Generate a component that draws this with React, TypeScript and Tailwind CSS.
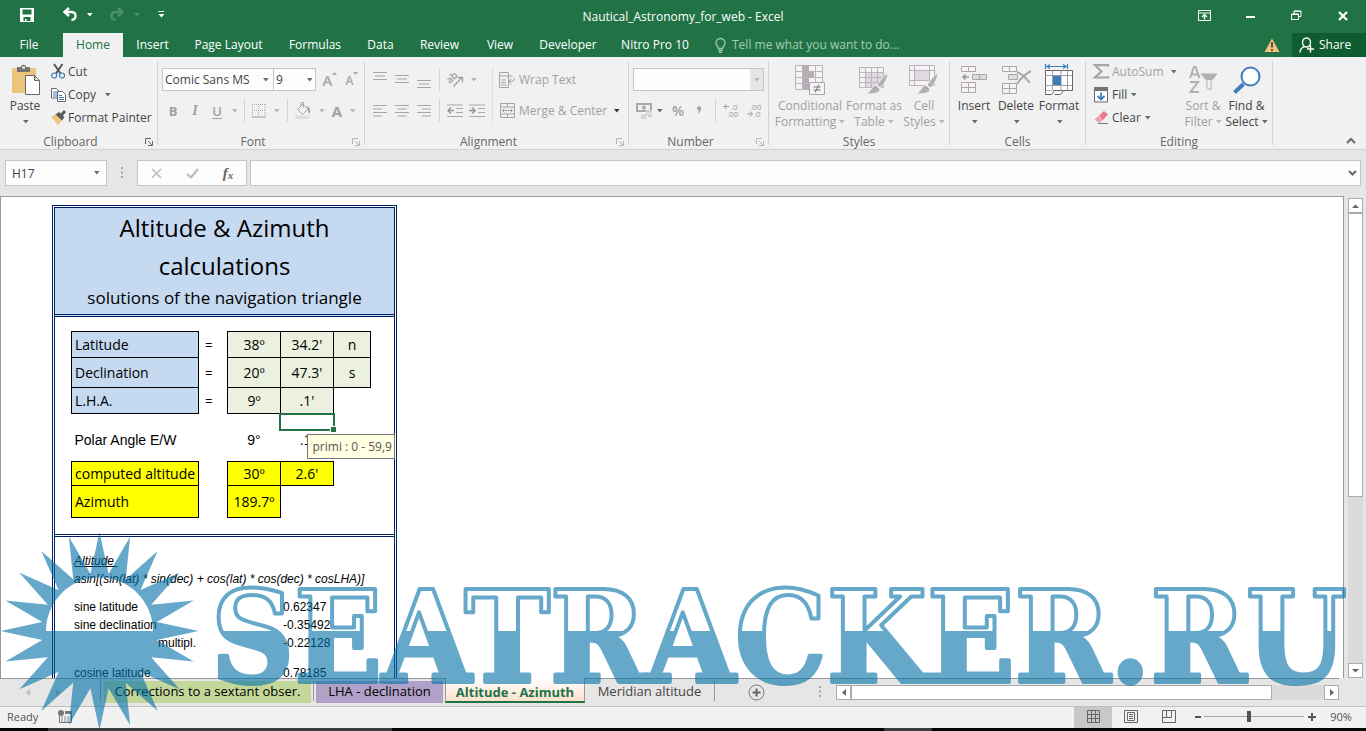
import { FC, ReactNode } from "react";

type IconProps = { w: number; h: number; children: ReactNode };

const Icon: FC<IconProps> = ({ w, h, children }) => (
  <svg width={w} height={h} viewBox={`0 0 ${w} ${h}`} fill="none" aria-hidden="true" className="shrink-0 overflow-visible">
    {children}
  </svg>
);

// Small drop-down triangle
const Caret: FC<{ tone?: "dark" | "mid" | "light" }> = ({ tone = "mid" }) => {
  const color = { dark: "#333333", mid: "#6a6a6a", light: "#b5b5b5" }[tone];
  return (
    <Icon w={7} h={4}>
      <path d="M1 0h5.6L3.8 3.4z" fill={color} />
    </Icon>
  );
};

const Divider: FC = () => <span className="h-[22px] w-px shrink-0 bg-[#d2d2d2]" />;

type ToolProps = { label: string; width: string; disabled?: boolean; children: ReactNode };

const Tool: FC<ToolProps> = ({ label, width, disabled = true, children }) => (
  <button
    type="button"
    aria-label={label}
    disabled={disabled}
    className={`flex h-6 shrink-0 items-center justify-center ${width}`}
  >
    {children}
  </button>
);

type GroupProps = { title: string; width: string; launcher?: "on" | "off"; children: ReactNode };

const Group: FC<GroupProps> = ({ title, width, launcher, children }) => (
  <section aria-label={title} className={`relative flex shrink-0 flex-col ${width}`}>
    <div className="flex h-[77px]">{children}</div>
    <div className="flex h-[15px] items-center pr-px">
      <span className="flex-1 text-center text-[12px] leading-[15px] text-[#666666]">{title}</span>
      {launcher && (
        <button
          type="button"
          aria-label={`${title} settings`}
          className={`flex w-4 justify-center ${launcher === "on" ? "text-[#666666]" : "text-[#b5b5b5]"}`}
        >
          <Icon w={8} h={8}>
            <path d="M.5 6V.5H6" stroke="currentColor" />
            <path d="M3 3l4 4M7.5 3v4.5H3" stroke="currentColor" />
          </Icon>
        </button>
      )}
    </div>
    <span className="absolute right-0 top-1 h-[84px] w-px bg-[#d2d2d2]" />
  </section>
);

type BigButtonProps = {
  icon: ReactNode;
  line1: string;
  line2?: string;
  width: string;
  disabled?: boolean;
};

const BigButton: FC<BigButtonProps> = ({ icon, line1, line2, width, disabled }) => (
  <button
    type="button"
    disabled={disabled}
    className={`flex shrink-0 flex-col items-center text-[12px] leading-4 ${width} ${disabled ? "text-[#a0a0a0]" : "text-[#444444]"}`}
  >
    <span className="flex h-[41px] items-center pt-1">{icon}</span>
    <span className="whitespace-nowrap">{line1}</span>
    <span className="flex h-4 items-center gap-0.5 whitespace-nowrap">
      {line2}
      <Caret tone={disabled ? "light" : "mid"} />
    </span>
  </button>
);

type RowButtonProps = { icon: ReactNode; label: string; disabled?: boolean; caret?: "dark" | "mid"; gap?: string };

const RowButton: FC<RowButtonProps> = ({ icon, label, disabled, caret, gap = "gap-1" }) => (
  <button
    type="button"
    className={`flex h-[23px] items-center whitespace-nowrap text-[12px] leading-4 ${gap} ${disabled ? "text-[#a0a0a0]" : "text-[#444444]"}`}
  >
    <span className="flex w-4 justify-center">{icon}</span>
    <span>{label}</span>
    {caret && <Caret tone={caret} />}
  </button>
);

// Text lines drawn in each alignment
const LINES: Record<string, string> = {
  top: "M0 1.5h14M2 5h10M0 8.5h14",
  middle: "M0 4.5h14M2 8h10M0 11.5h14",
  bottom: "M0 9.5h14M2 13h10M0 16.5h14",
  left: "M0 3.5h14M0 7h9M0 10.5h14M0 14h9",
  center: "M0 3.5h14M2.5 7h9M0 10.5h14M2.5 14h9",
  right: "M0 3.5h14M5 7h9M0 10.5h14M5 14h9",
};

const AlignIcon: FC<{ kind: string }> = ({ kind }) => (
  <Icon w={14} h={18}>
    <path d={LINES[kind]} stroke="#a6a6a6" />
  </Icon>
);

const IndentIcon: FC<{ arrow: string }> = ({ arrow }) => (
  <Icon w={16} h={14}>
    <path d="M0 1h16M9 4.500h7M9 8.500h7M0 12.500h16" stroke="#a9a9a9" />
    <path d={arrow} stroke="#989898" strokeWidth="1.6" />
  </Icon>
);

const Brush: FC = () => (
  <>
    <path d="M29 8c-5 3-8 8-11 12l3 3c4-3 7-8 8-15z" fill="#b0aeb0" stroke="#f1f1f1" />
    <path d="M17 20l4 4c0 4-5 5-14 5 5-2 5-8 10-9z" fill="#b0aeb0" stroke="#f1f1f1" />
  </>
);

const TABS = [
  { name: "Insert", width: "w-[59px]" },
  { name: "Page Layout", width: "w-[93px]" },
  { name: "Formulas", width: "w-[80px]" },
  { name: "Data", width: "w-[51px]" },
  { name: "Review", width: "w-[67px]" },
  { name: "View", width: "w-[54px]" },
  { name: "Developer", width: "w-[82px]" },
  { name: "Nitro Pro 10", width: "w-[92px]" },
];

const TitleBar: FC = () => (
  <header className="grid h-[33px] shrink-0 grid-cols-[1fr_auto_1fr] items-center bg-[#217346] text-white">
    <div className="flex items-center pb-1 pl-5">
      <button type="button" aria-label="Save">
        <Icon w={14} h={14}>
          <path d="M0 0h14v14H0z" fill="#fff" />
          <path d="M2.500 1.500h9v5h-9zM3.500 9h7v4H6.500v-2h-1.500v2H3.500z" fill="#217346" />
        </Icon>
      </button>
      <button type="button" aria-label="Undo" className="ml-7 flex items-center gap-2">
        <Icon w={16} h={14}>
          <path d="M7 0L2.500 4 7 8M3 4h6c6 0 6 7 .5 8" stroke="#fff" strokeWidth="2.400" />
        </Icon>
        <Icon w={7} h={4}>
          <path d="M1 0h5.600L3.800 3.400z" fill="#fff" />
        </Icon>
      </button>
      <button type="button" aria-label="Redo" disabled className="ml-4 flex items-center gap-2">
        <Icon w={16} h={14}>
          <path d="M9 0l4.500 4L9 8M13 4H7C1 4 1 11 6.500 12" stroke="#4d9069" strokeWidth="2.400" />
        </Icon>
        <Icon w={7} h={4}>
          <path d="M1 0h5.600L3.800 3.400z" fill="#4d9069" />
        </Icon>
      </button>
      <button type="button" aria-label="Customize toolbar" className="ml-[18px]">
        <Icon w={7} h={7}>
          <path d="M.5.500h5.500" stroke="#fff" />
          <path d="M.5 3h6L3.500 6.500z" fill="#fff" />
        </Icon>
      </button>
    </div>
    <h1 className="text-[12px] leading-4">Nautical_Astronomy_for_web - Excel</h1>
    <div className="flex items-center justify-end pb-0.5 pr-[18px]">
      <button type="button" aria-label="Ribbon options" className="mr-[35px]">
        <Icon w={13} h={11}>
          <path d="M.5.500h12v10H.5zM.5 3h12" stroke="#fff" />
          <path d="M6.500 9.500V5M4 7l2.500-2.500L9 7" stroke="#fff" strokeWidth="1.300" />
        </Icon>
      </button>
      <button type="button" aria-label="Minimize" className="mr-9">
        <Icon w={9} h={5}>
          <path d="M0 4h9" stroke="#fff" strokeWidth="2" />
        </Icon>
      </button>
      <button type="button" aria-label="Restore" className="mr-9">
        <Icon w={11} h={11}>
          <path d="M.5 4h7v5.500h-7zM3 4V1h7v5.500H7.500M.5 4.500h7M3 1.300h7" stroke="#fff" />
        </Icon>
      </button>
      <button type="button" aria-label="Close">
        <Icon w={10} h={10}>
          <path d="M1 1l8 8M9 1L1 9" stroke="#fff" strokeWidth="2.200" />
        </Icon>
      </button>
    </div>
  </header>
);

const RibbonTabs: FC = () => (
  <nav aria-label="Ribbon" className="flex h-6 shrink-0 items-stretch bg-[#217346] text-[12px] leading-4 text-white">
    <button type="button" className="w-[58px] shrink-0">File</button>
    <button type="button" className="ml-[5px] w-[60px] shrink-0 bg-[#f1f1f1] text-[#217346]">Home</button>
    {TABS.map((tab) => (
      <button key={tab.name} type="button" className={`shrink-0 whitespace-nowrap ${tab.width}`}>
        {tab.name}
      </button>
    ))}
    <button type="button" className="ml-3.5 flex items-center gap-1.5 whitespace-nowrap text-[#a6cbb5]">
      <Icon w={11} h={15}>
        <path d="M3.500 10.500c0-2-2.500-3-2.500-5.500a4.500 4.500 0 019 0c0 2.500-2.500 3.500-2.500 5.500zM3.500 12.500h4M4 14.300h3" stroke="#a6cbb5" strokeWidth="1.300" />
      </Icon>
      Tell me what you want to do...
    </button>
    <span className="ml-auto mr-3 flex items-center">
      <Icon w={16} h={14}>
        <path d="M8 .5L15.500 14H.5z" fill="#f0c27b" />
        <path d="M8 4v5.500M8 11v2" stroke="#444" strokeWidth="1.800" />
      </Icon>
    </span>
    <button type="button" className="flex w-[74px] items-center gap-1 bg-[#0e5c2f] pl-[7px]">
      <Icon w={16} h={16}>
        <path d="M7.500 1a4 4.500 0 010 9 4 4.500 0 010-9M1 15.500c0-3 2-5 4.500-5.800M8 12h7M11.500 8.500v7" stroke="#fff" strokeWidth="1.400" />
      </Icon>
      Share
    </button>
  </nav>
);

const ClipboardGroup: FC = () => (
  <Group title="Clipboard" width="w-[158px]" launcher="on">
    <BigButton
      width="w-[50px]"
      line1="Paste"
      icon={
        <Icon w={30} h={32}>
          <path d="M2 4h24v25H2z" fill="#ecc47c" />
          <path d="M7 3h4c0-3 5-3 5 0h4v5H7z" fill="#737373" />
          <path d="M12 2.500h3v2h-3z" fill="#f1f1f1" />
          <path d="M15.500 11.500h9l5 5v14h-14zM24.500 11.500v5h5" fill="#fff" stroke="#666" />
        </Icon>
      }
    />
    <div className="flex flex-col items-start pt-[3px]">
      <RowButton
        gap="gap-0.5"
        label="Cut"
        icon={
          <Icon w={14} h={15}>
            <path d="M3 0l6.500 9.500M11.500 0L5 9.500" stroke="#555" strokeWidth="2" />
            <circle cx="3.200" cy="11.500" r="2.500" stroke="#3e7dbd" strokeWidth="1.200" />
            <circle cx="11" cy="11.500" r="2.500" stroke="#3e7dbd" strokeWidth="1.200" />
          </Icon>
        }
      />
      <div className="flex items-center gap-2">
        <RowButton
          gap="gap-0.5"
          label="Copy"
          icon={
            <Icon w={15} h={14}>
              <path d="M.5.500h5l2.500 2.500v7H.5z" fill="#fff" stroke="#666" />
              <path d="M2 4h4M2 6h4M2 8h4" stroke="#3e7dbd" />
              <path d="M6.500 3.500h5l3 3v7h-8z" fill="#fff" stroke="#666" />
              <path d="M8 7.500h3M8 9.500h5M8 11.500h5" stroke="#3e7dbd" />
            </Icon>
          }
        />
        <Caret />
      </div>
      <RowButton
        gap="gap-0.5"
        label="Format Painter"
        icon={
          <Icon w={15} h={14}>
            <path d="M0 5.500l5-2 6 6-4 4.500z" fill="#ecc47c" />
            <path d="M4.500 3.500L8 1l5.500 5L11 9.500z" fill="#5b5b5b" />
            <path d="M10 4.500L14 0" stroke="#5b5b5b" strokeWidth="3" />
          </Icon>
        }
      />
    </div>
  </Group>
);

const FontGroup: FC = () => (
  <Group title="Font" width="w-[207px]" launcher="off">
    <div className="flex flex-col pl-1 pt-[7px]">
      <div className="flex h-[31px] items-center">
        <div className="relative h-[23px] w-[112px]">
          <select aria-label="Font name" className="block h-full w-full appearance-none border border-[#c6c6c6] bg-[#fdfdfd] pl-0.5 text-[12px] leading-4 text-[#444444]">
            <option>Comic Sans MS</option>
          </select>
          <span className="pointer-events-none absolute inset-y-0 right-[5px] flex items-center"><Caret /></span>
        </div>
        <div className="relative -ml-px h-[23px] w-[43px]">
          <select aria-label="Font size" className="block h-full w-full appearance-none border border-[#c6c6c6] bg-[#fdfdfd] pl-0.5 text-[12px] leading-4 text-[#444444]">
            <option>9</option>
          </select>
          <span className="pointer-events-none absolute inset-y-0 right-[3px] flex items-center"><Caret /></span>
        </div>
        <Tool label="Increase font size" width="w-7">
          <span className="text-[15px] font-semibold leading-4 text-[#a6a6a6]">A</span>
          <span className="mb-3 flex">
            <Icon w={5} h={3}><path d="M0 3h5L2.500 0z" fill="#a6a6a6" /></Icon>
          </span>
        </Tool>
        <Tool label="Decrease font size" width="w-4">
          <span className="pt-0.5 text-[12px] font-semibold leading-4 text-[#a6a6a6]">A</span>
          <span className="mb-3 flex">
            <Icon w={5} h={3}><path d="M0 0h5L2.500 3z" fill="#a6a6a6" /></Icon>
          </span>
        </Tool>
      </div>
      <div className="flex h-[31px] items-center text-[13px] leading-4 text-[#a0a0a0]">
        <Tool label="Bold" width="w-[22px]"><span className="font-bold">B</span></Tool>
        <Tool label="Italic" width="w-[22px]"><span className="font-['Liberation_Serif',serif] text-[14px] font-bold italic">I</span></Tool>
        <Tool label="Underline" width="w-[22px]"><span className="font-semibold underline underline-offset-2">U</span></Tool>
        <Tool label="Underline style" width="w-3"><Caret tone="light" /></Tool>
        <span className="w-1" />
        <Divider />
        <Tool label="Borders" width="w-7">
          <Icon w={14} h={14}>
            <path d="M.5 0v12M6.500 0v12M13 0v12M0 .5h13M0 6.500h13" stroke="#b59dbb" strokeDasharray="1 1" />
            <path d="M0 13h14" stroke="#999" />
          </Icon>
        </Tool>
        <Caret tone="light" />
        <span className="w-[7px]" />
        <Divider />
        <Tool label="Fill colour" width="w-[30px]">
          <Icon w={16} h={17}>
            <path d="M2.500 7.500L8 2l5 5-5.500 5.500zM6 5V.500h2.500v5" fill="#f1f1f1" stroke="#a6a6a6" />
            <path d="M12 4c3 1 4 4 2.500 8-2-2-1-5-2.500-8z" fill="#a6a6a6" />
            <path d="M0 13.500h15V17H0z" fill="#e3dde3" />
          </Icon>
        </Tool>
        <Caret tone="light" />
        <Tool label="Font colour" width="w-6"><span className="text-[15px] font-bold">A</span></Tool>
        <Caret tone="light" />
      </div>
    </div>
  </Group>
);

const AlignmentGroup: FC = () => (
  <Group title="Alignment" width="w-[264px]" launcher="off">
    <div className="flex flex-col pl-1 pt-[7px]">
      <div className="flex h-[31px] items-center">
        <Tool label="Top align" width="w-[22px]"><AlignIcon kind="top" /></Tool>
        <Tool label="Middle align" width="w-[22px]"><AlignIcon kind="middle" /></Tool>
        <Tool label="Bottom align" width="w-[22px]"><AlignIcon kind="bottom" /></Tool>
        <span className="w-1" />
        <Divider />
        <Tool label="Orientation" width="w-[30px]">
          <Icon w={16} h={16}>
            <text x="-1" y="9" transform="rotate(-45 5 6)" fontSize="10" fontWeight="600" fill="#a0a0a0">ab</text>
            <path d="M6.500 14.500l8.500-9M10.500 5.500h5v5" stroke="#a0a0a0" strokeWidth="1.300" />
          </Icon>
        </Tool>
        <Caret tone="light" />
      </div>
      <div className="flex h-[31px] items-center">
        <Tool label="Align left" width="w-[22px]"><AlignIcon kind="left" /></Tool>
        <Tool label="Center" width="w-[22px]"><AlignIcon kind="center" /></Tool>
        <Tool label="Align right" width="w-[22px]"><AlignIcon kind="right" /></Tool>
        <span className="w-1" />
        <Divider />
        <span className="w-1" />
        <Tool label="Decrease indent" width="w-[22px]"><IndentIcon arrow="M7 6.500H1M4 3.500l-3 3 3 3" /></Tool>
        <Tool label="Increase indent" width="w-[22px]"><IndentIcon arrow="M0 6.500h6M3 3.500l3 3-3 3" /></Tool>
      </div>
    </div>
    <span className="ml-1 mt-2.5 h-[55px] w-px bg-[#dcdcdc]" />
    <div className="flex flex-col justify-between pb-[12px] pl-1.5 pt-[11px]">
      <RowButton
        disabled
        label="Wrap Text"
        icon={
          <Icon w={16} h={16}>
            <path d="M.5.500h9v15h-9zM.5 4h13M2 8h5M2 10.500h5M2 13h6" stroke="#a6a2a6" />
            <path d="M15.500 6c0 3-2 3.500-5 3.500M12.500 7l-3 2.500 3 2.500" stroke="#a0a0a0" />
          </Icon>
        }
      />
      <div className="flex items-center gap-1.5">
        <RowButton
          disabled
          label="Merge &amp; Center"
          icon={
            <Icon w={15} h={15}>
              <path d="M.5.500h14v14H.5zM.5 4h14M.5 11h14M7.500.500V4M7.500 11v3.500" stroke="#a6a2a6" />
              <path d="M2.500 7.500h10M4.500 5.500l-2 2 2 2M10.500 5.500l2 2-2 2" stroke="#a0a0a0" />
            </Icon>
          }
        />
        <Caret tone="dark" />
      </div>
    </div>
  </Group>
);

const NumberGroup: FC = () => (
  <Group title="Number" width="w-[140px]" launcher="off">
    <div className="flex flex-col pl-1 pt-[7px]">
      <div className="flex h-[31px] items-center">
        <div className="relative h-[23px] w-[131px]">
          <select aria-label="Number format" disabled className="block h-full w-full appearance-none border border-[#c6c6c6] bg-[#fdfdfd]">
            <option />
          </select>
          <span className="pointer-events-none absolute inset-y-px right-px flex w-[13px] items-center justify-center bg-[#e6e6e6]">
            <Caret tone="light" />
          </span>
        </div>
      </div>
      <div className="flex h-[31px] items-center text-[#a0a0a0]">
        <Tool label="Accounting format" width="w-[23px]">
          <Icon w={17} h={16}>
            <path d="M1 1h14v7H1z" stroke="#aaa" strokeWidth="2" />
            <circle cx="8" cy="4.500" r="2" fill="#aaa" />
            <path d="M10 8h6M10 10.500h6M5 12.500h6M5 15h5M12 13h4" stroke="#d4cfd4" strokeWidth="1.800" />
          </Icon>
        </Tool>
        <Caret />
        <Tool label="Percent" width="w-[30px]"><span className="text-[14px] font-semibold leading-4">%</span></Tool>
        <Tool label="Comma" width="w-3">
          <Icon w={6} h={9}>
            <path d="M1 2.300a2 2 0 114 0c0 3-1.500 4.500-3.500 6C2.500 6.500 3 5 2.800 4.300A2 2 0 011 2.300z" fill="#a0a0a0" />
          </Icon>
        </Tool>
        <span className="w-2.5" />
        <Divider />
        <Tool label="Increase decimal" width="w-[30px]">
          <Icon w={16} h={15}>
            <path d="M6 3.500H1M3.500 1L1 3.500 3.500 6" stroke="#999" />
            <text x="8" y="7" fontSize="8" fill="#999">.0</text>
            <text x="4" y="14" fontSize="8" fill="#999">.00</text>
          </Icon>
        </Tool>
        <Tool label="Decrease decimal" width="w-4">
          <Icon w={16} h={15}>
            <text x="4" y="7" fontSize="8" fill="#999">.00</text>
            <text x="8" y="14" fontSize="8" fill="#999">.0</text>
            <path d="M1 11h5.500M4 8.500L6.500 11 4 13.500" stroke="#999" />
          </Icon>
        </Tool>
      </div>
    </div>
  </Group>
);

const StylesGroup: FC = () => (
  <Group title="Styles" width="w-[181px]">
    <div className="flex pl-[5px]">
      <BigButton
        disabled
        width="w-[72px]"
        line1="Conditional"
        line2="Formatting"
        icon={
          <Icon w={30} h={30}>
            <path d="M.5.500h27v24H.5z" fill="#f7f2f7" stroke="#b8b4b8" />
            <path d="M8 0h6v6h5v6h-5v6h2v6H8z" fill="#b0aeb0" />
            <path d="M.5 6.500h27M.5 12.500h27M.5 18.500h27M7.500.500v24M20.500.500v24" stroke="#b8b4b8" />
            <path d="M14.500 17.500h15v12h-15z" fill="#f7f2f7" stroke="#a8a4a8" />
            <path d="M18.500 22h7M18.500 25h7M24 19.500l-4 8" stroke="#777" />
          </Icon>
        }
      />
      <BigButton
        disabled
        width="w-14"
        line1="Format as"
        line2="Table"
        icon={
          <Icon w={30} h={30}>
            <path d="M.5 2.500h24v20H.5z" fill="#f7f2f7" stroke="#b8b4b8" />
            <path d="M7 8h17v14H7z" fill="#dfdadf" />
            <path d="M.5 7.500h24M.5 12.500h24M.5 17.500h24M6.500 2.500v20M12.500 2.500v20M18.500 2.500v20" stroke="#b8b4b8" />
            <Brush />
          </Icon>
        }
      />
      <BigButton
        disabled
        width="w-11"
        line1="Cell"
        line2="Styles"
        icon={
          <Icon w={30} h={30}>
            <path d="M.5.500h25v20H.5z" fill="#f7f2f7" stroke="#b8b4b8" />
            <path d="M6 6h14v9H6z" fill="#dfdadf" />
            <path d="M.5 5.500h25M.5 15.500h25M5.500.500v20M20.500.500v20" stroke="#b8b4b8" />
            <Brush />
          </Icon>
        }
      />
    </div>
  </Group>
);

const CellsGroup: FC = () => (
  <Group title="Cells" width="w-[136px]">
    <div className="flex pl-[3px]">
      <BigButton
        width="w-[42px]"
        line1="Insert"
        icon={
          <Icon w={28} h={30}>
            <path d="M1.500 1.500h14v5h-14zM8.500 1.500v5M1.500 17.500h14v10h-14zM8.500 17.500v10M1.500 22.500h14" fill="#f7f2f7" stroke="#aaa6aa" />
            <path d="M12.500 9.500h14v5h-14zM19.500 9.500v5" fill="#dfdadf" stroke="#aaa6aa" />
            <path d="M9 12H3M5.500 9.500L3 12l2.500 2.500" stroke="#999" strokeWidth="1.500" />
          </Icon>
        }
      />
      <BigButton
        width="w-[42px]"
        line1="Delete"
        icon={
          <Icon w={30} h={30}>
            <path d="M1.500 1.500h14v5h-14zM8.500 1.500v5M1.500 18.500h14v10h-14zM8.500 18.500v10M1.500 23.500h14" fill="#f7f2f7" stroke="#aaa6aa" />
            <path d="M7.500 9.500h9v5h-9z" fill="#dfdadf" stroke="#aaa6aa" />
            <path d="M16 7c5 2 9 6 13 11M30 6c-6 3-10 7-14 13" stroke="#aaaaaa" strokeWidth="2" />
          </Icon>
        }
      />
      <BigButton
        width="w-11"
        line1="Format"
        icon={
          <Icon w={30} h={32}>
            <path d="M1.500 0v5M23.500 0v5M3 2.500h19M6 .5l-3 2 3 2M19 .5l3 2-3 2" stroke="#3e7dbd" strokeWidth="1.200" />
            <path d="M1.500 6.500h27v20h-27z" fill="#fff" stroke="#666" />
            <path d="M1.500 11.500h27M1.500 21.500h27M8.500 6.500v20M17 6.500v20M23.500 6.500v20" stroke="#a0a0a0" />
            <path d="M9 12h8v9H9z" fill="#3e7dbd" />
            <path d="M1.500 26.500v4h6l3-4M10.500 30.500h6l3-4" fill="#fff" stroke="#666" />
          </Icon>
        }
      />
    </div>
  </Group>
);

const EditingGroup: FC = () => (
  <Group title="Editing" width="w-[187px]">
    <div className="flex w-[93px] flex-col items-start pl-[7px] pt-[3px]">
      <div className="flex items-center gap-1.5">
        <RowButton
          disabled
          gap="gap-[3px]"
          label="AutoSum"
          icon={
            <Icon w={16} h={15}>
              <path d="M15 2.800V1.200H2l6.500 6.300L2 13.500h13V12" stroke="#a6a6a6" strokeWidth="2.200" />
            </Icon>
          }
        />
        <Caret />
      </div>
      <RowButton
        gap="gap-[3px]"
        label="Fill"
        caret="mid"
        icon={
          <Icon w={14} h={16}>
            <path d="M.5 2.500h13v12.500H.5z" fill="#fff" stroke="#666" />
            <path d="M0 0h14v4H0z" fill="#737373" />
            <path d="M7 5.500v7M3.500 9L7 12.500 10.500 9" stroke="#3e7dbd" strokeWidth="1.800" />
          </Icon>
        }
      />
      <RowButton
        gap="gap-[3px]"
        label="Clear"
        caret="mid"
        icon={
          <Icon w={14} h={13}>
            <path d="M5 4.500L10 0l4 3.500-5.500 6z" fill="#e8798f" />
            <path d="M4.500 5L.500 8.500l4 3h1.500l2-2z" fill="#eea0ae" />
            <path d="M4 12.500h10" stroke="#777" />
          </Icon>
        }
      />
    </div>
    <BigButton
      disabled
      width="w-12"
      line1="Sort &amp;"
      line2="Filter"
      icon={
        <Icon w={29} h={28}>
          <path d="M1 12L5 1h1.500L10.500 12M2.500 8.500h6.500M1 16h8L1.500 26h8.500" stroke="#b0b0b0" strokeWidth="2" />
          <path d="M12 8h16l-6 7v9l-4-2v-7z" fill="#f7f2f7" stroke="#b0b0b0" />
          <path d="M12 8h16l-5 6h-5z" fill="#b0b0b0" />
        </Icon>
      }
    />
    <BigButton
      width="w-[39px]"
      line1="Find &amp;"
      line2="Select"
      icon={
        <Icon w={28} h={28}>
          <path d="M1.500 26.500l9-8.500" stroke="#3e7dbd" strokeWidth="4" />
          <circle cx="17.500" cy="10.500" r="9" fill="#fff" stroke="#3e7dbd" strokeWidth="2" />
        </Icon>
      }
    />
  </Group>
);

const Ribbon: FC = () => (
  <div className="flex shrink-0 border-b border-[#d2d2d2] bg-[#f1f1f1]">
    <ClipboardGroup />
    <FontGroup />
    <AlignmentGroup />
    <NumberGroup />
    <StylesGroup />
    <CellsGroup />
    <EditingGroup />
    <button type="button" aria-label="Collapse ribbon" className="mb-1 ml-auto mr-2.5 self-end">
      <Icon w={10} h={8}>
        <path d="M1 6l4-4 4 4" stroke="#6a6a6a" strokeWidth="2" />
      </Icon>
    </button>
  </div>
);

const Dots: FC = () => (
  <Icon w={3} h={12}>
    <path d="M0 1h2M0 5.500h2M0 10h2" stroke="#a6a6a6" strokeWidth="2" />
  </Icon>
);

const FormulaBar: FC = () => (
  <div className="flex h-[46px] shrink-0 items-center px-[5px] text-[12px] leading-4 text-[#444444]">
    <div className="relative h-[26px] w-[102px] shrink-0">
      <input aria-label="Name box" defaultValue="H17" className="block h-full w-full border border-[#c6c6c6] bg-[#fdfdfd] px-1.5" />
      <span className="pointer-events-none absolute inset-y-0 right-[7px] flex items-center"><Caret /></span>
    </div>
    <span className="flex w-[30px] shrink-0 justify-center"><Dots /></span>
    <div className="flex h-[26px] w-[110px] shrink-0 items-center border border-[#c6c6c6] bg-[#fdfdfd]">
      <Tool label="Cancel" width="w-9">
        <Icon w={11} h={11}><path d="M1 1l9 9M10 1l-9 9" stroke="#bdbdbd" strokeWidth="1.600" /></Icon>
      </Tool>
      <Tool label="Enter" width="w-9">
        <Icon w={13} h={11}><path d="M1 6l4 3.500L12 1" stroke="#bdbdbd" strokeWidth="2.200" /></Icon>
      </Tool>
      <Tool label="Insert function" width="w-9" disabled={false}>
        <span className="font-['Liberation_Serif',serif] text-[15px] font-bold italic leading-4 text-[#666666]">f</span>
        <span className="pt-1 font-['Liberation_Serif',serif] text-[11px] font-bold italic leading-4 text-[#666666]">x</span>
      </Tool>
    </div>
    <div className="relative ml-[3px] h-[26px] flex-1">
      <input aria-label="Formula" className="block h-full w-full border border-[#c6c6c6] bg-[#fdfdfd] px-2" />
      <button type="button" aria-label="Expand formula bar" className="absolute inset-y-0 right-1 flex items-center">
        <Icon w={9} h={7}>
          <path d="M1 1l3.500 3.500L8 1" stroke="#6a6a6a" strokeWidth="2" />
        </Icon>
      </button>
    </div>
  </div>
);

const LABEL_BLUE = "border border-black bg-[#c5d9f1] pl-[3px]";
const INPUT_GREEN = "border border-black bg-[#ebf1de] text-center";
const YELLOW = "border border-black bg-[#ffff00]";

const InputTable: FC = () => (
  <table className="ml-4 mt-3.5 w-[300px] table-fixed border-collapse text-[14px] leading-5 text-black">
    <colgroup>
      <col className="w-[127px]" />
      <col className="w-[29px]" />
      <col className="w-[53px]" />
      <col className="w-[53px]" />
      <col className="w-[37px]" />
    </colgroup>
    <tbody>
      <tr className="h-[26px]">
        <td className={LABEL_BLUE}>Latitude</td>
        <td className="pl-1.5 text-[13px]">=</td>
        <td className={INPUT_GREEN}>38º</td>
        <td className={INPUT_GREEN}>34.2'</td>
        <td className={INPUT_GREEN}>n</td>
      </tr>
      <tr className="h-[30px]">
        <td className={LABEL_BLUE}>Declination</td>
        <td className="pl-1.5 text-[13px]">=</td>
        <td className={INPUT_GREEN}>20º</td>
        <td className={INPUT_GREEN}>47.3'</td>
        <td className={INPUT_GREEN}>s</td>
      </tr>
      <tr className="h-[26px]">
        <td className={LABEL_BLUE}>L.H.A.</td>
        <td className="pl-1.5 text-[13px]">=</td>
        <td className={INPUT_GREEN}>9º</td>
        <td className={INPUT_GREEN}>.1'</td>
        <td />
      </tr>
      <tr className="h-4">
        <td />
        <td />
        <td />
        <td className="relative p-0">
          {/* Selection frame, fill handle and validation hint */}
          <span className="absolute -inset-y-px -left-0.5 -right-px border-2 border-[#217346]" />
          <span className="absolute -bottom-0.5 -right-0.5 h-[6px] w-[6px] border-l border-t border-white bg-[#217346]" />
          <span
            role="tooltip"
            className="absolute left-[26px] top-5 z-10 flex h-[25px] w-[88px] items-center whitespace-nowrap border border-[#767676] bg-[#ffffe1] pl-[5px] font-['Open_Sans',sans-serif] text-[12px] leading-4 text-[#575757]"
          >
            primi : 0 - 59,9
          </span>
        </td>
        <td />
      </tr>
      <tr className="h-5 font-['Liberation_Sans',Arial,sans-serif] leading-4">
        <td className="pl-[3px]">Polar Angle E/W</td>
        <td />
        <td className="text-center">9°</td>
        <td className="text-center">.1'</td>
        <td />
      </tr>
      <tr className="h-3">
        <td colSpan={5} />
      </tr>
      <tr className="h-6">
        <td className={`whitespace-nowrap pl-[3px] ${YELLOW}`}>computed altitude</td>
        <td />
        <td className={`text-center ${YELLOW}`}>30º</td>
        <td className={`text-center ${YELLOW}`}>2.6'</td>
        <td />
      </tr>
      <tr className="h-8">
        <td className={`pl-[3px] ${YELLOW}`}>Azimuth</td>
        <td />
        <td className={`text-center ${YELLOW}`}>189.7º</td>
        <td />
        <td />
      </tr>
    </tbody>
  </table>
);

const Worksheet: FC = () => (
  <main className="min-w-0 flex-1 overflow-hidden border-l border-r border-t border-[#999999] bg-white">
    <article className="ml-[51px] mt-2 w-[345px] border-x-[3px] border-t-[3px] border-double border-[#002060] font-['Comic_Sans_MS','Open_Sans',sans-serif] text-black">
      <h2 className="border-b-[3px] border-double border-[#002060] bg-[#c5d9f1] pb-1 pt-px text-center">
        <span className="block px-12 text-[24px] leading-[38px]">Altitude &amp; Azimuth calculations</span>
        <span className="block text-[17px] leading-[25px]">solutions of the navigation triangle</span>
      </h2>
      <div className="border-b-[3px] border-double border-[#002060] pb-4">
        <InputTable />
      </div>
      <div className="pb-10 pl-[19px] pt-[15px] font-['Liberation_Sans',Arial,sans-serif] text-[12px] leading-[18px]">
        <p className="whitespace-pre italic underline">Altitude </p>
        <p className="whitespace-nowrap italic">asin[(sin(lat) * sin(dec) + cos(lat) * cos(dec) * cosLHA)]</p>
        <table className="mt-2.5 w-[300px] table-fixed border-collapse">
          <colgroup>
            <col className="w-[122px]" />
            <col className="w-[87px]" />
            <col />
          </colgroup>
          <tbody>
            <tr><td>sine latitude</td><td /><td>0.62347</td></tr>
            <tr><td>sine declination</td><td /><td>-0.35492</td></tr>
            <tr><td className="text-right">multipl.</td><td /><td>-0.22128</td></tr>
            <tr className="align-bottom"><td className="pt-3">cosine latitude</td><td /><td>0.78185</td></tr>
          </tbody>
        </table>
      </div>
    </article>
  </main>
);

const VerticalScroll: FC = () => (
  <div className="flex w-[22px] shrink-0 flex-col pl-1 pr-[3px] pt-0.5">
    <button type="button" aria-label="Scroll up" className="flex h-[15px] shrink-0 items-center justify-center border border-[#ababab] bg-white">
      <Icon w={7} h={4}><path d="M0 4h7L3.500.500z" fill="#666" /></Icon>
    </button>
    <div className="flex-1 bg-[#dbdbdb]">
      <div className="h-[63%] border border-[#ababab] bg-white" />
    </div>
    <button type="button" aria-label="Scroll down" className="flex h-[15px] shrink-0 items-center justify-center border border-[#ababab] bg-white">
      <Icon w={7} h={4}><path d="M0 0h7L3.500 3.500z" fill="#666" /></Icon>
    </button>
  </div>
);

const SheetTabs: FC = () => (
  <div className="flex h-7 shrink-0 items-start text-[13px] leading-4 text-black">
    <div className="flex h-7 w-[100px] shrink-0 items-center gap-[26px] border-t border-[#999999] pl-[26px]">
      <Icon w={4} h={7}><path d="M4 0v7L0 3.500z" fill="#bdbdbd" /></Icon>
      <Icon w={4} h={7}><path d="M0 0v7l4-3.500z" fill="#bdbdbd" /></Icon>
    </div>
    <div className="flex h-7 shrink-0 items-start border-t border-[#999999] pt-0.5">
      <span className="mr-[3px] h-5 w-px bg-[#999999]" />
      <button type="button" className="h-[22px] w-[207px] whitespace-nowrap bg-[#c4d79b] pb-0.5">Corrections to a sextant obser.</button>
      <span className="mx-[2px] h-5 w-px bg-[#999999]" />
      <button type="button" className="h-[22px] w-[127px] whitespace-nowrap bg-[#b1a0c7] pb-0.5">LHA - declination</button>
      <span className="w-0.5" />
    </div>
    <button type="button" className="h-[25px] w-[140px] shrink-0 whitespace-nowrap border-x border-b-2 border-x-[#999999] border-b-[#217346] bg-linear-to-b from-white to-[#fde0cd] pt-1 font-bold text-[#217346]">
      Altitude - Azimuth
    </button>
    <div className="flex h-7 min-w-0 flex-1 items-start border-t border-[#999999] pt-0.5">
      <button type="button" className="h-[22px] w-[129px] shrink-0 whitespace-nowrap pb-0.5 text-[#444444]">Meridian altitude</button>
      <span className="h-5 w-px shrink-0 bg-[#999999]" />
      <button type="button" aria-label="New sheet" className="ml-[33px] mt-[3px] shrink-0">
        <Icon w={17} h={17}>
          <circle cx="8.500" cy="8.500" r="7.500" stroke="#777" />
          <path d="M4.500 8.500h8M8.500 4.500v8" stroke="#666" strokeWidth="2" />
        </Icon>
      </button>
      <span className="ml-auto mr-3.5 mt-[5px]"><Dots /></span>
      <div className="mt-1 flex h-[15px] w-[503px] bg-[#dbdbdb]">
        <button type="button" aria-label="Scroll left" className="flex w-[15px] items-center justify-center border border-[#ababab] bg-white">
          <Icon w={4} h={7}><path d="M4 0v7L0 3.500z" fill="#666" /></Icon>
        </button>
        <div className="w-[421px] border border-[#ababab] bg-white" />
        <button type="button" aria-label="Scroll right" className="ml-auto flex w-[15px] items-center justify-center border border-[#ababab] bg-white">
          <Icon w={4} h={7}><path d="M0 0v7l4-3.500z" fill="#666" /></Icon>
        </button>
      </div>
    </div>
    <span className="w-[27px] shrink-0" />
  </div>
);

const StatusBar: FC = () => (
  <footer className="flex h-[22px] shrink-0 items-center border-t border-[#c0c0c0] bg-[#f1f1f1] pl-[7px] text-[11px] leading-4 text-[#555555]">
    <span className="pb-0.5">Ready</span>
    <button type="button" aria-label="Record macro" className="ml-5 pb-0.5">
      <Icon w={14} h={13}>
        <path d="M1.500 5v7.500h12V2H8" stroke="#777" />
        <path d="M7 1h7v3H7z" fill="#777" />
        <circle cx="3" cy="3" r="3" fill="#777" />
        <path d="M3 7h9M3 9h9M3 11h9" stroke="#888" strokeDasharray="2 1" />
      </Icon>
    </button>
    <div className="ml-auto flex h-full items-center">
      <button type="button" aria-label="Normal view" className="flex h-full w-[38px] items-center justify-center bg-[#c8c8c8] pb-0.5">
        <Icon w={13} h={13}><path d="M.5.500h12v12H.5zM.5 4.500h12M.5 8.500h12M4.500.500v12M8.500.500v12" stroke="#666" /></Icon>
      </button>
      <button type="button" aria-label="Page layout view" className="flex h-full w-[38px] items-center justify-center pb-0.5">
        <Icon w={14} h={13}><path d="M.5.500h13v12H.5zM3.500 2.500h7v8h-7zM5 4.500h4M5 6.500h4M5 8.500h4" stroke="#666" /></Icon>
      </button>
      <button type="button" aria-label="Page break view" className="flex h-full w-[38px] items-center justify-center pb-0.5">
        <Icon w={14} h={13}><path d="M.5.500h13v12H.5zM4.500.500v7M9.500.500v7M.5 7.500h9" stroke="#666" /></Icon>
      </button>
      <button type="button" aria-label="Zoom out" className="ml-1 flex w-3 justify-center pb-0.5">
        <Icon w={6} h={2}><path d="M0 1h6" stroke="#555" strokeWidth="2" /></Icon>
      </button>
      <input
        type="range"
        aria-label="Zoom"
        min={0}
        max={100}
        defaultValue={45}
        className="mb-0.5 h-3 w-[100px] appearance-none bg-[linear-gradient(#a6a6a6,#a6a6a6)] bg-[length:100%_1px] bg-center bg-no-repeat [&::-webkit-slider-thumb]:h-[11px] [&::-webkit-slider-thumb]:w-1 [&::-webkit-slider-thumb]:appearance-none [&::-webkit-slider-thumb]:bg-[#555555]"
      />
      <button type="button" aria-label="Zoom in" className="flex w-4 justify-center pb-0.5">
        <Icon w={8} h={8}><path d="M0 4h8M4 0v8" stroke="#555" strokeWidth="2" /></Icon>
      </button>
      <span className="w-[46px] pb-0.5 pr-1 text-center">90%</span>
    </div>
  </footer>
);

// Alternating tip and notch points round the sun
const SUN_POINTS = Array.from({ length: 40 }, (_, i) => {
  const angle = (i * Math.PI) / 20;
  const radius = i % 2 === 0 ? 99 : 58;
  return `${(99.5 + radius * Math.sin(angle)).toFixed(1)},${(98 - radius * Math.cos(angle)).toFixed(1)}`;
}).join(" ");

const Watermark: FC = () => (
  <svg viewBox="0 0 1366 198" className="pointer-events-none absolute inset-x-0 bottom-0 w-full opacity-60">
    <defs>
      <linearGradient id="tide" gradientUnits="userSpaceOnUse" x1="0" y1="0" x2="0" y2="198">
        <stop offset="0.495" stopColor="#0070a8" stopOpacity="0" />
        <stop offset="0.495" stopColor="#0070a8" />
      </linearGradient>
      <mask id="sky">
        <rect width="1366" height="198" fill="#fff" />
        <path d="M46 98a53.500 53.500 0 01107 0z" fill="#000" />
      </mask>
    </defs>
    <polygon points={SUN_POINTS} fill="#0070a8" mask="url(#sky)" />
    <text
      x="211"
      y="149"
      fontSize="128"
      fill="url(#tide)"
      stroke="#0070a8"
      strokeWidth="4"
      strokeLinejoin="round"
      className="font-['DejaVu_Serif_Condensed','DejaVu_Serif',serif] font-bold"
    >
      SEATRACKER.RU
    </text>
  </svg>
);

const App: FC = () => (
  <div className="relative flex h-screen min-h-[600px] flex-col overflow-hidden bg-[#e6e6e6] font-['Open_Sans','Noto_Sans',sans-serif]">
    <TitleBar />
    <RibbonTabs />
    <Ribbon />
    <FormulaBar />
    <div className="flex min-h-0 flex-1">
      <Worksheet />
      <VerticalScroll />
    </div>
    <SheetTabs />
    <StatusBar />
    <div className="flex h-[3px] shrink-0 bg-black">
      <span className="ml-12 h-full w-[344px] bg-[#3a3a3a]" />
      <span className="ml-[492px] h-full w-12 bg-[#3a3a3a]" />
    </div>
    <Watermark />
  </div>
);

export default App;
